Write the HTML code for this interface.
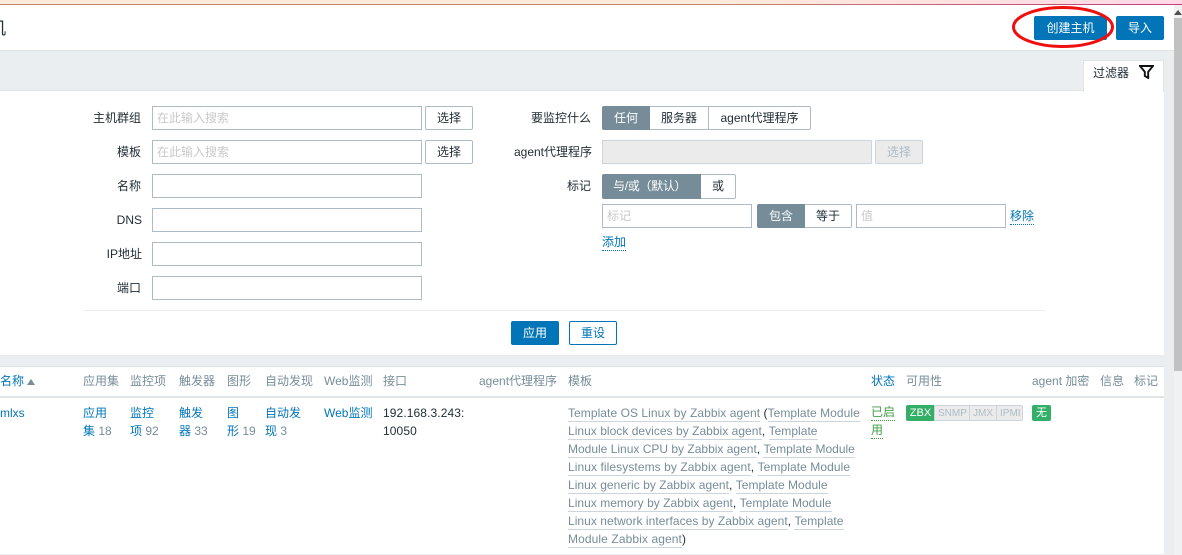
<!DOCTYPE html>
<html lang="zh-CN"><head><meta charset="utf-8"><title>主机</title>
<style>
html,body{margin:0;padding:0;width:1182px;height:555px;overflow:hidden;background:#fff}
body{position:relative;font:12px/14px "Liberation Sans","Noto Sans CJK SC",sans-serif;color:#1f2c33}
.a{position:absolute;white-space:nowrap}
.box{position:absolute;box-sizing:border-box;background:#fff;border:1px solid #acbbc7}
.ph{color:#c9c9c9;padding-left:4px;line-height:23px}
.lab{position:absolute;text-align:right;width:120px;white-space:nowrap}
.btn{position:absolute;box-sizing:border-box;text-align:center;border:1px solid #acbbc7;border-radius:2px;background:#fff;line-height:23px}
.seg{position:absolute;box-sizing:border-box;text-align:center;border:1px solid #acbbc7;line-height:22px;background:#fff}
.on{background:#768d99;color:#fff;border-color:#768d99}
.blue{background:#0275b8;color:#fff;border:1px solid #0275b8;border-radius:2px;position:absolute;box-sizing:border-box;text-align:center;line-height:22px}
.h{position:absolute;top:374px;color:#768d99;white-space:nowrap}
.l{color:#0275b8}
.n{color:#768d99}
.lk{position:absolute;color:#0275b8;white-space:nowrap;line-height:18px}
.tp{position:absolute;left:568px;white-space:nowrap;line-height:18px;color:#1f2c33}
.tp u{color:#768d99;text-decoration:none;border-bottom:1px solid #ccd5db;padding-bottom:0;display:inline-block;line-height:16px}
.dot{border-bottom:1px dotted #0275b8}
</style></head><body>
<div class="a" style="left:0;top:0;width:1182px;height:4px;background:linear-gradient(90deg,#fdeadb 0,#fdeadb 60%,#fdd9e6 100%)"></div>
<div class="a" style="left:0;top:4px;width:1182px;height:1px;background:linear-gradient(90deg,#c08a70 0,#c08a70 60%,#c83a80 100%)"></div>

<div class="a" style="left:0;top:51px;width:1174px;height:504px;background:#ebeef0"></div>
<div class="a" style="left:0;top:50px;width:1174px;height:1px;background:#dfe4e7"></div>
<div class="a" style="left:0;top:5px;width:1174px;height:45px;background:#fff"></div>
<div class="a" style="left:-11px;top:19px;font-size:17px;line-height:20px;color:#1f2c33">机</div>

<div class="blue" style="left:1034px;top:16px;width:73px;height:24px">创建主机</div>
<div class="blue" style="left:1116px;top:16px;width:48px;height:24px">导入</div>

<svg class="a" style="left:1008px;top:4px" width="110" height="46" viewBox="0 0 110 46"><ellipse cx="55" cy="23" rx="49.5" ry="19.5" fill="none" stroke="#f00f0f" stroke-width="3"/></svg>

<!-- filter panel -->
<div class="a" style="left:0;top:90px;width:1164px;height:265px;background:#fff;border-top:1px solid #dfe4e7;box-sizing:border-box"></div>
<div class="a" style="left:1083px;top:60px;width:81px;height:32px;background:#fff;border:1px solid #dfe4e7;border-bottom:0;box-sizing:border-box"></div>
<div class="a" style="left:1093px;top:66px;line-height:14px">过滤器</div>
<svg class="a" style="left:1139px;top:65px" width="15" height="14" viewBox="0 0 15 14"><path d="M1 1H14L9.2 6.8V13L5.8 11V6.8Z" fill="none" stroke="#111" stroke-width="1.9"/></svg>

<div class="lab" style="left:21px;top:111px">主机群组</div>
<div class="lab" style="left:21px;top:145px">模板</div>
<div class="lab" style="left:21px;top:179px">名称</div>
<div class="lab" style="left:22px;top:213px">DNS</div>
<div class="lab" style="left:22px;top:247px">IP地址</div>
<div class="lab" style="left:21px;top:281px">端口</div>

<div class="box ph" style="left:152px;top:106px;width:270px;height:24px">在此输入搜索</div>
<div class="box ph" style="left:152px;top:140px;width:270px;height:24px">在此输入搜索</div>
<div class="box" style="left:152px;top:174px;width:270px;height:24px"></div>
<div class="box" style="left:152px;top:208px;width:270px;height:24px"></div>
<div class="box" style="left:152px;top:242px;width:270px;height:24px"></div>
<div class="box" style="left:152px;top:276px;width:270px;height:24px"></div>
<div class="btn" style="left:425px;top:106px;width:48px;height:24px">选择</div>
<div class="btn" style="left:425px;top:140px;width:48px;height:24px">选择</div>

<div class="lab" style="left:471px;top:111px">要监控什么</div>
<div class="lab" style="left:472px;top:145px">agent代理程序</div>
<div class="lab" style="left:471px;top:179px">标记</div>

<div class="seg on" style="left:602px;top:106px;width:48px;height:24px;border-radius:2px 0 0 2px">任何</div>
<div class="seg" style="left:650px;top:106px;width:59px;height:24px;border-left:0">服务器</div>
<div class="seg" style="left:708px;top:106px;width:103px;height:24px;border-radius:0 2px 2px 0">agent代理程序</div>

<div class="box" style="left:602px;top:140px;width:270px;height:24px;background:#ebebeb;border-color:#ccd5db"></div>
<div class="btn" style="left:875px;top:140px;width:48px;height:24px;background:#ebebeb;border-color:#ccd5db;color:#acbbc7">选择</div>

<div class="seg on" style="left:602px;top:174px;width:99px;height:25px;border-radius:2px 0 0 2px;line-height:23px;letter-spacing:-.3px;text-align:left;padding-left:10px">与/或（默认）</div>
<div class="seg" style="left:701px;top:174px;width:35px;height:25px;border-left:0;border-radius:0 2px 2px 0;line-height:23px">或</div>

<div class="box ph" style="left:602px;top:204px;width:150px;height:24px">标记</div>
<div class="seg on" style="left:757px;top:204px;width:48px;height:24px;border-radius:2px 0 0 2px">包含</div>
<div class="seg" style="left:805px;top:204px;width:47px;height:24px;border-left:0;border-radius:0 2px 2px 0">等于</div>
<div class="box ph" style="left:856px;top:204px;width:150px;height:24px">值</div>
<div class="a l dot" style="left:1010px;top:209px;line-height:15px">移除</div>
<div class="a l dot" style="left:602px;top:235px;line-height:15px">添加</div>

<div class="a" style="left:84px;top:310px;width:961px;height:1px;background:#ebeef0"></div>
<div class="blue" style="left:511px;top:321px;width:48px;height:24px">应用</div>
<div class="a l" style="left:569px;top:321px;width:48px;height:24px;box-sizing:border-box;border:1px solid #0275b8;border-radius:2px;text-align:center;line-height:22px">重设</div>

<!-- table -->
<div class="a" style="left:0;top:366px;width:1164px;height:189px;background:#fff;border-top:1px solid #dfe4e7;box-sizing:border-box"></div>
<div class="a" style="left:0;top:396px;width:1164px;height:2px;background:#dfe4e7"></div>
<div class="a" style="left:0;top:554px;width:1164px;height:1px;background:#ebeef0"></div>

<div class="h l" style="left:0">名称</div>
<svg class="a" style="left:27px;top:379px" width="8" height="6" viewBox="0 0 8 6"><path d="M4 0L8 6H0Z" fill="#768d99"/></svg>
<div class="h" style="left:83px">应用集</div>
<div class="h" style="left:130px">监控项</div>
<div class="h" style="left:179px">触发器</div>
<div class="h" style="left:227px">图形</div>
<div class="h" style="left:265px">自动发现</div>
<div class="h" style="left:324px">Web监测</div>
<div class="h" style="left:383px">接口</div>
<div class="h" style="left:479px">agent代理程序</div>
<div class="h" style="left:568px">模板</div>
<div class="h l" style="left:871px">状态</div>
<div class="h" style="left:906px">可用性</div>
<div class="h" style="left:1032px">agent 加密</div>
<div class="h" style="left:1100px">信息</div>
<div class="h" style="left:1134px">标记</div>

<div class="lk" style="left:0;top:404px">mlxs</div>
<div class="lk" style="left:83px;top:404px">应用<br>集 <span class="n">18</span></div>
<div class="lk" style="left:130px;top:404px">监控<br>项 <span class="n">92</span></div>
<div class="lk" style="left:179px;top:404px">触发<br>器 <span class="n">33</span></div>
<div class="lk" style="left:227px;top:404px">图<br>形 <span class="n">19</span></div>
<div class="lk" style="left:265px;top:404px">自动发<br>现 <span class="n">3</span></div>
<div class="lk" style="left:324px;top:404px">Web监测</div>
<div class="a" style="left:383px;top:404px;line-height:18px;letter-spacing:.1px">192.168.3.243:<br>10050</div>

<div class="tp" style="top:404px;letter-spacing:.06px"><u>Template OS Linux by Zabbix agent</u> (<u>Template Module</u></div>
<div class="tp" style="top:422px;letter-spacing:.03px"><u>Linux block devices by Zabbix agent</u>, <u>Template</u></div>
<div class="tp" style="top:440px"><u>Module Linux CPU by Zabbix agent</u>, <u>Template Module</u></div>
<div class="tp" style="top:458px;letter-spacing:.08px"><u>Linux filesystems by Zabbix agent</u>, <u>Template Module</u></div>
<div class="tp" style="top:476px;letter-spacing:.03px"><u>Linux generic by Zabbix agent</u>, <u>Template Module</u></div>
<div class="tp" style="top:494px;letter-spacing:.03px"><u>Linux memory by Zabbix agent</u>, <u>Template Module</u></div>
<div class="tp" style="top:512px;letter-spacing:.04px"><u>Linux network interfaces by Zabbix agent</u>, <u>Template</u></div>
<div class="tp" style="top:530px;letter-spacing:.1px"><u>Module Zabbix agent</u>)</div>

<div class="a" style="left:871px;top:405px;color:#429e47;line-height:15px;border-bottom:1px dotted #429e47">已启</div>
<div class="a" style="left:871px;top:423px;color:#429e47;line-height:15px;border-bottom:1px dotted #429e47">用</div>

<div class="a" style="left:906px;top:405px;width:29px;height:16px;background:#34af67;color:#fff;font-size:11px;line-height:17px;text-align:center;border-radius:2px 0 0 2px">ZBX</div>
<div class="a" style="left:934px;top:405px;width:89px;height:16px;box-sizing:border-box;background:#ebebeb;border:1px solid #ccd5db;border-radius:0 2px 2px 0"></div>
<div class="a" style="left:938px;top:407px;font-size:10px;color:#acbbc7;line-height:13px">SNMP</div>
<div class="a" style="left:969px;top:405px;width:1px;height:16px;background:#ccd5db"></div>
<div class="a" style="left:973px;top:407px;font-size:10px;color:#acbbc7;line-height:13px">JMX</div>
<div class="a" style="left:996px;top:405px;width:1px;height:16px;background:#ccd5db"></div>
<div class="a" style="left:1000px;top:407px;font-size:10px;color:#acbbc7;line-height:13px">IPMI</div>
<div class="a" style="left:1032px;top:405px;width:19px;height:16px;background:#34af67;color:#fff;font-size:11px;line-height:17px;text-align:center;border-radius:2px">无</div>

<!-- scrollbar -->
<div class="a" style="left:1174px;top:5px;width:8px;height:550px;background:#f1f1f1"></div>
<div class="a" style="left:1174px;top:18px;width:8px;height:353px;background:#c1c1c1"></div>
<svg class="a" style="left:1174px;top:9px" width="8" height="6" viewBox="0 0 8 6"><path d="M0 6L4 1L8 6Z" fill="#505050"/></svg>
</body></html>
